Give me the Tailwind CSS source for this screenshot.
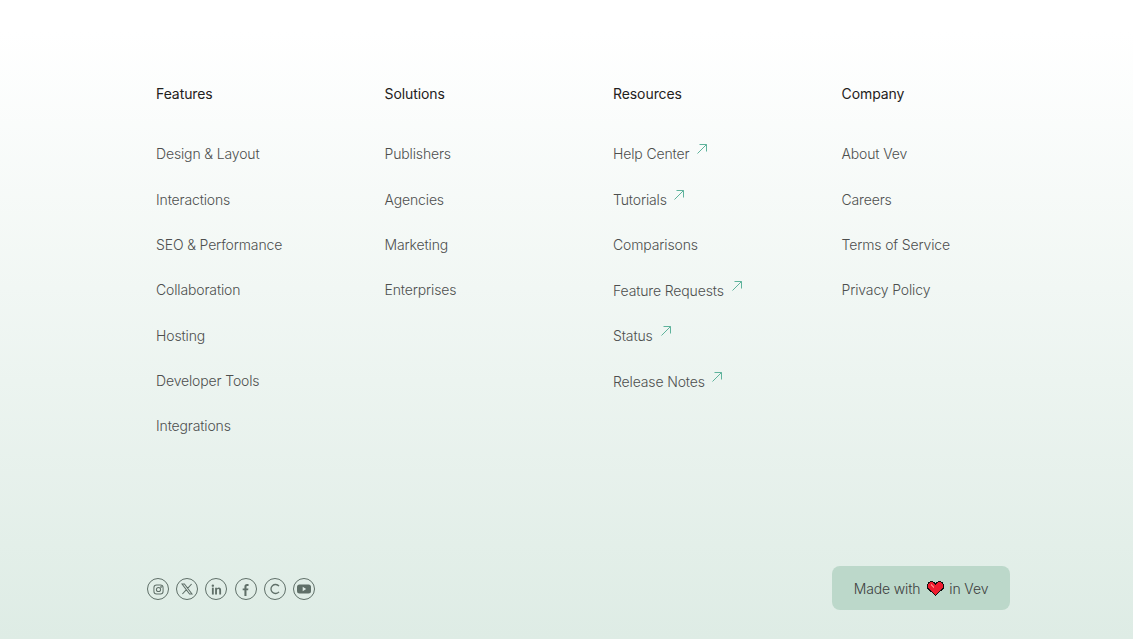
<!DOCTYPE html>
<html lang="en">
<head>
    <meta charset="UTF-8">
    <title>Vev footer</title>
    <script src="https://cdn.jsdelivr.net/npm/@tailwindcss/browser@4"></script>
</head>
<body>
    <footer class="h-[639px] w-full overflow-hidden bg-gradient-to-b from-white from-[5%] to-[#deece5] to-100% font-['Inter',sans-serif] text-[14px] font-light tracking-[-0.14px] text-[#4d4f4e]">
        <div class="ml-[156px] grid w-[914px] grid-cols-4 pt-[85px]">
            <div>
                <h3 class="mb-[42.3px] h-[18px] leading-[18px] font-normal tracking-[-0.08px] text-[#1f2120]">Features</h3>
                <ul class="flex flex-col gap-[27.33px] leading-[18px]">
                    <li>Design &amp; Layout</li>
                    <li>Interactions</li>
                    <li>SEO &amp; Performance</li>
                    <li>Collaboration</li>
                    <li>Hosting</li>
                    <li>Developer Tools</li>
                    <li>Integrations</li>
                </ul>
            </div>
            <div>
                <h3 class="mb-[42.3px] h-[18px] leading-[18px] font-normal tracking-[-0.08px] text-[#1f2120]">Solutions</h3>
                <ul class="flex flex-col gap-[27.33px] leading-[18px]">
                    <li>Publishers</li>
                    <li>Agencies</li>
                    <li>Marketing</li>
                    <li>Enterprises</li>
                </ul>
            </div>
            <div>
                <h3 class="mb-[42.3px] h-[18px] leading-[18px] font-normal tracking-[-0.08px] text-[#1f2120]">Resources</h3>
                <ul class="flex flex-col gap-[27.5px] leading-[18px]">
                    <li class="flex">Help Center
                        <svg class="mt-[-1px] ml-[8px] h-[10px] w-[10px]" viewBox="0 0 10 10" fill="none" stroke="#5fb39c" stroke-width="1"><path d="M.5 9.500 9.500 .5M2.500 .5H9.500V7.500"/></svg>
                    </li>
                    <li class="flex">Tutorials
                        <svg class="mt-[-1px] ml-[7px] h-[10px] w-[10px]" viewBox="0 0 10 10" fill="none" stroke="#5fb39c" stroke-width="1"><path d="M.5 9.500 9.500 .5M2.500 .5H9.500V7.500"/></svg>
                    </li>
                    <li>Comparisons</li>
                    <li class="flex">Feature Requests
                        <svg class="mt-[-1px] ml-[8px] h-[10px] w-[10px]" viewBox="0 0 10 10" fill="none" stroke="#5fb39c" stroke-width="1"><path d="M.5 9.500 9.500 .5M2.500 .5H9.500V7.500"/></svg>
                    </li>
                    <li class="flex">Status
                        <svg class="mt-[-1px] ml-[8px] h-[10px] w-[10px]" viewBox="0 0 10 10" fill="none" stroke="#5fb39c" stroke-width="1"><path d="M.5 9.500 9.500 .5M2.500 .5H9.500V7.500"/></svg>
                    </li>
                    <li class="flex">Release Notes
                        <svg class="mt-[-1px] ml-[7px] h-[10px] w-[10px]" viewBox="0 0 10 10" fill="none" stroke="#5fb39c" stroke-width="1"><path d="M.5 9.500 9.500 .5M2.500 .5H9.500V7.500"/></svg>
                    </li>
                </ul>
            </div>
            <div>
                <h3 class="mb-[42.3px] h-[18px] leading-[18px] font-normal tracking-[-0.08px] text-[#1f2120]">Company</h3>
                <ul class="flex flex-col gap-[27.33px] leading-[18px]">
                    <li>About Vev</li>
                    <li>Careers</li>
                    <li>Terms of Service</li>
                    <li>Privacy Policy</li>
                </ul>
            </div>
        </div>

        <div class="mt-[130.7px] ml-[147px] flex w-[863px] items-center justify-between">
            <div class="mt-[3px] flex gap-[7.2px]">
                <span class="flex h-[22px] w-[22px] items-center justify-center rounded-full border-[1.3px] border-[#5f6f68]">
                    <svg class="h-[11px] w-[11px]" viewBox="0 0 12 12" fill="none" stroke="#5f6f68" stroke-width="1.100"><rect x="1" y="1" width="10" height="10" rx="3"/><circle cx="6" cy="6" r="2.300"/><circle cx="8.800" cy="3.200" r=".4"/></svg>
                </span>
                <span class="flex h-[22px] w-[22px] items-center justify-center rounded-full border-[1.3px] border-[#5f6f68]">
                    <svg class="h-[12px] w-[12px]" viewBox="0 0 12 12" fill="none" stroke="#5f6f68" stroke-width="1.100"><path d="M1 1h2.400L11 11H8.600ZM10.600 1 6.600 5.400M5.200 6.900 1.400 11"/></svg>
                </span>
                <span class="flex h-[22px] w-[22px] items-center justify-center rounded-full border-[1.3px] border-[#5f6f68]">
                    <svg class="h-[11px] w-[11px]" viewBox="0 0 12 12" fill="#5f6f68"><circle cx="2" cy="1.800" r="1.300"/><rect x="1" y="4" width="2" height="7.500"/><path d="M4.500 4h2v1c.5-.8 1.200-1.200 2.100-1.200 1.700 0 2.400 1.100 2.400 2.800v4.900H9V7c0-.9-.3-1.500-1.100-1.500S6.500 6.100 6.500 7v4.500h-2Z"/></svg>
                </span>
                <span class="flex h-[22px] w-[22px] items-center justify-center rounded-full border-[1.3px] border-[#5f6f68]">
                    <svg class="h-[13px] w-[13px]" viewBox="0 0 12 12" fill="#5f6f68"><path d="M5 12V6.800H3.400V5H5V3.600C5 1.900 5.900 1 7.400 1H8.800V2.800H7.800C7.100 2.800 6.900 3.100 6.900 3.800V5H8.700L8.400 6.800H6.900V12Z"/></svg>
                </span>
                <span class="flex h-[22px] w-[22px] items-center justify-center rounded-full border-[1.3px] border-[#5f6f68]">
                    <svg class="h-[12px] w-[12px]" viewBox="0 0 12 12" fill="none" stroke="#5f6f68" stroke-width="1.300"><path d="M10 3.200A4.500 4.500 0 1 0 10 8.800"/></svg>
                </span>
                <span class="flex h-[22px] w-[22px] items-center justify-center rounded-full border-[1.3px] border-[#5f6f68]">
                    <svg class="h-[12px] w-[14px]" viewBox="0 0 14 12"><rect y="1.500" width="14" height="9" rx="2.500" fill="#5f6f68"/><path d="M5.700 3.800 9.200 6 5.700 8.200Z" fill="#deebe5"/></svg>
                </span>
            </div>
            <a class="flex h-[44px] w-[178px] items-center justify-center rounded-[8px] bg-[#bcd8ca] pt-[2px] text-[#3d3f3e]">Made with
                <svg class="mr-[5px] ml-[7px] h-[15px] w-[17px]" viewBox="0 0 17 15" shape-rendering="crispEdges"><path d="M8.500 14.500 1 7.500C-.2 5.300.5 1.300 3.500.7 5.500.4 7.500 1 8.500 3 9.500 1 11.500.4 13.500.7 16.500 1.300 17.200 5.300 16 7.500Z" fill="#ee1c2e" stroke="#111" stroke-width="1"/><path d="M4 3.500 7 6.500" stroke="#f77" stroke-width="1.500"/></svg>
                in Vev</a>
        </div>
    </footer>
</body>
</html>
